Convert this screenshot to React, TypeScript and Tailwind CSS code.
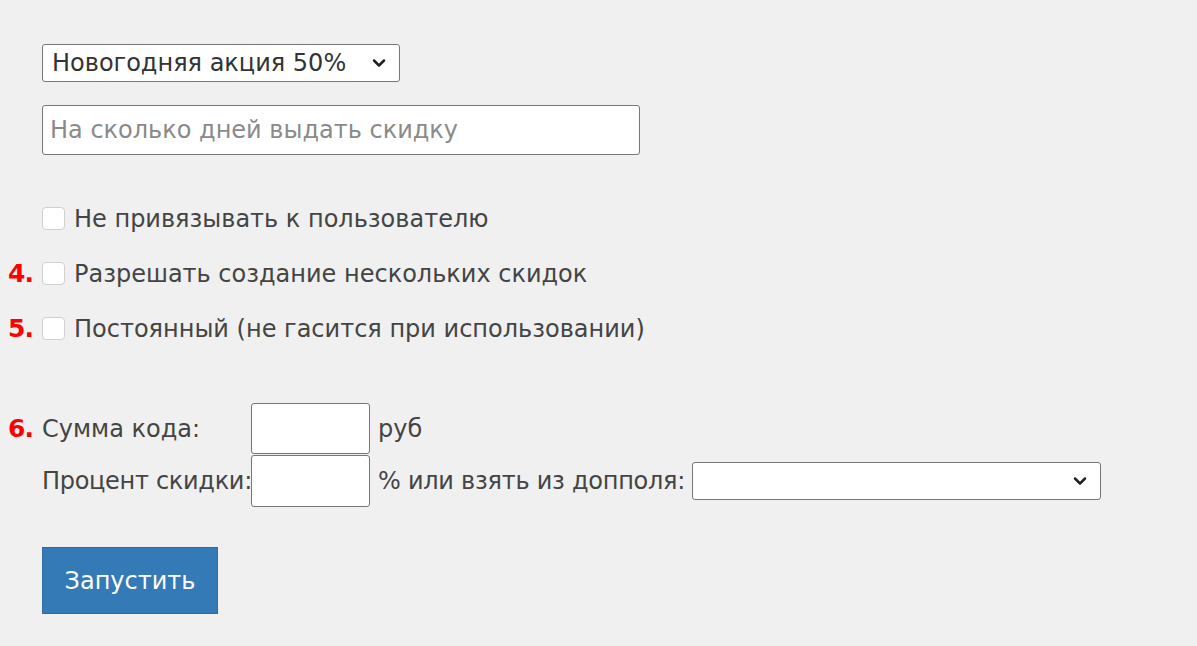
import { ChevronDown } from "lucide-react";

const font = { fontFamily: '"DejaVu Sans", Verdana, sans-serif' };

const Mark = ({ n }: { n?: string }) => (
  <span className="w-[34px] shrink-0 text-[25px] font-bold leading-none tracking-[-1px] text-[#ff0000]">{n}</span>
);

const Check = ({ n, label }: { n?: string; label: string }) => (
  <label className="flex h-[55px] items-center">
    <Mark n={n} />
    <span className="h-[23px] w-[23px] shrink-0 rounded-[4px] border border-[#d0d0d0] bg-white" />
    <span className="ml-[9px] text-[24px] text-[#444]">{label}</span>
  </label>
);

export default function App() {
  return (
    <div className="min-h-[646px] w-full bg-[#f0f0f0] pl-[8px] pt-[44px]" style={font}>
      <div className="flex">
        <Mark />
        <div className="flex h-[38px] w-[358px] items-center justify-between rounded-[3px] border border-[#767676] bg-white pl-[9px] pr-[10px] text-[24px] text-[#333]">
          <span>Новогодняя акция 50%</span>
          <ChevronDown size={20} strokeWidth={3} className="text-[#222]" />
        </div>
      </div>

      <div className="mt-[23px] flex">
        <Mark />
        <div className="flex h-[50px] w-[598px] items-center rounded-[3px] border border-[#767676] bg-white pl-[7px] text-[24px] text-[#8a8a8a]">
          На сколько дней выдать скидку
        </div>
      </div>

      <div className="mt-[36px]">
        <Check label="Не привязывать к пользователю" />
        <Check n="4." label="Разрешать создание нескольких скидок" />
        <Check n="5." label="Постоянный (не гасится при использовании)" />
      </div>

      <div className="mt-[47px] flex items-center">
        <Mark n="6." />
        <span className="w-[209px] whitespace-nowrap text-[24px] text-[#444]">Сумма кода:</span>
        <div className="h-[51px] w-[119px] shrink-0 rounded-[3px] border border-[#767676] bg-white" />
        <span className="ml-[8px] text-[24px] text-[#444]">руб</span>
      </div>

      <div className="mt-px flex items-center">
        <Mark />
        <span className="w-[209px] whitespace-nowrap text-[24px] tracking-[-0.3px] text-[#444]">Процент скидки:</span>
        <div className="h-[52px] w-[119px] shrink-0 rounded-[3px] border border-[#767676] bg-white" />
        <span className="ml-[8px] whitespace-nowrap text-[24px] tracking-[-0.25px] text-[#444]">% или взять из допполя:</span>
        <div className="ml-[7px] flex h-[38px] w-[409px] shrink-0 items-center justify-end rounded-[3px] border border-[#767676] bg-white pr-[10px]">
          <ChevronDown size={20} strokeWidth={3} className="text-[#222]" />
        </div>
      </div>

      <div className="mt-[40px] flex">
        <Mark />
        <button className="h-[67px] w-[176px] border border-[#2e6da4] bg-[#337ab7] text-[24px] text-white">
          Запустить
        </button>
      </div>
    </div>
  );
}
